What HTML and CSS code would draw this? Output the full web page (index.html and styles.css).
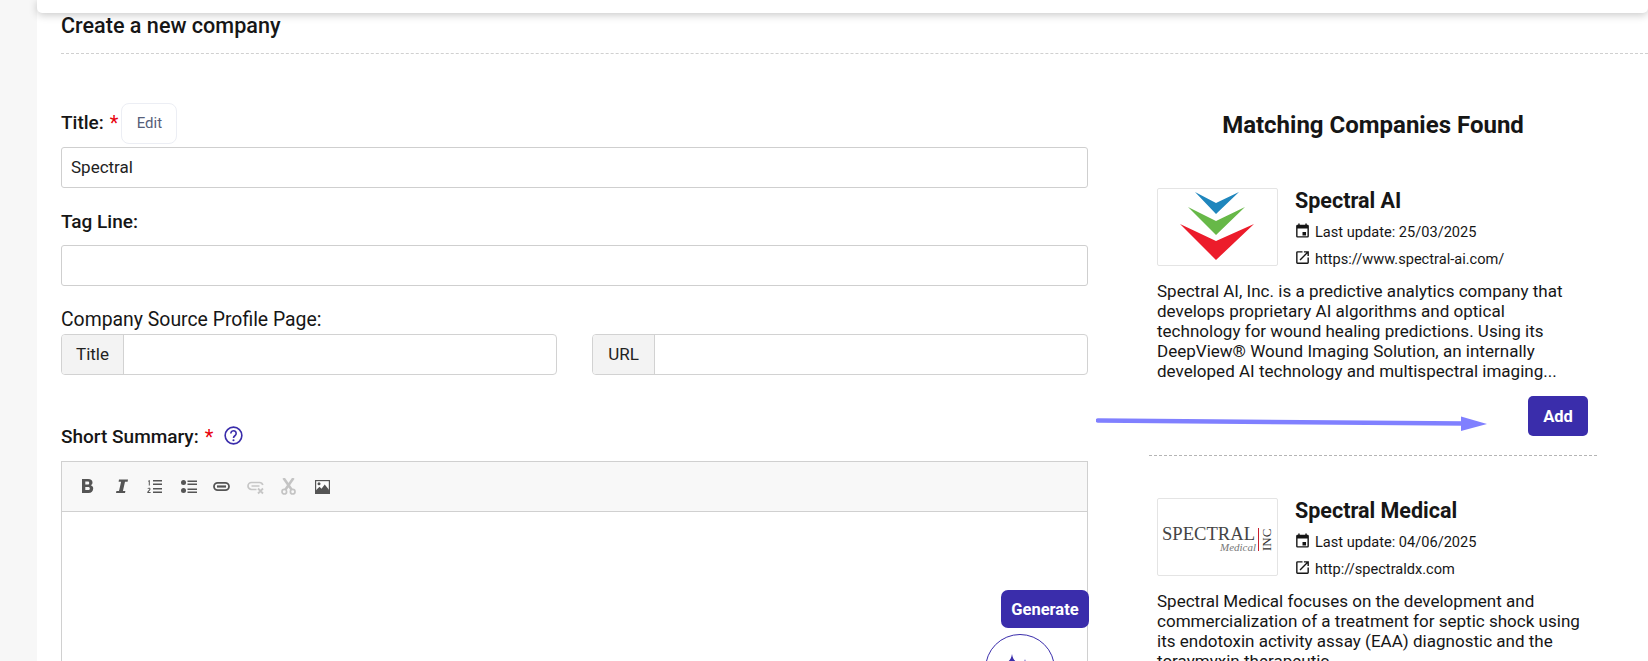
FILE: index.html
```html
<!DOCTYPE html>
<html lang="en">
<head>
<meta charset="utf-8">
<title>Create a new company</title>
<link rel="stylesheet" href="styles.css">
</head>
<body>
<div class="page">
  <aside class="rail"></aside>
  <div class="shell">
    <header class="topbar"></header>
    <main class="content">
      <h1 class="page-title">Create a new company</h1>
      <div class="columns">
        <form class="form">
          <div class="label-row title-row">
            <label class="label strong">Title:</label><span class="req">*</span>
            <button type="button" class="edit-btn">Edit</button>
          </div>
          <div class="input">Spectral</div>
          <label class="label strong tag-label">Tag Line:</label>
          <div class="input"></div>
          <label class="label source-label">Company Source Profile Page:</label>
          <div class="groups">
            <div class="group"><span class="addon">Title</span><span class="group-field"></span></div>
            <div class="group"><span class="addon">URL</span><span class="group-field"></span></div>
          </div>
          <div class="label-row summary-row">
            <label class="label strong">Short Summary:</label><span class="req">*</span>
            <svg class="help" viewBox="0 0 20 20" width="19" height="19"><circle cx="10" cy="10" r="8.800" fill="none" stroke="#3a2dab" stroke-width="1.700"/><path d="M7.200 7.800a2.800 2.800 0 1 1 4.500 2.200c-1.100.8-1.700 1.300-1.700 2.600" fill="none" stroke="#3a2dab" stroke-width="1.700"/><circle cx="10" cy="15" r="1.100" fill="#3a2dab"/></svg>
          </div>
          <div class="editor">
            <div class="toolbar">
              <svg class="tool" viewBox="0 0 17 17"><path d="M3 1h6.200c2.800 0 4.300 1.300 4.300 3.500 0 1.300-.6 2.300-1.800 2.800 1.600.5 2.500 1.600 2.500 3.200 0 2.700-1.800 4.500-4.700 4.500H3zm3.300 2.600v2.900h2.400c1 0 1.500-.5 1.500-1.500s-.6-1.400-1.500-1.400zm0 5.300v3.100h2.700c1.200 0 1.800-.6 1.800-1.600s-.6-1.500-1.800-1.500z" fill="#555"/></svg>
              <svg class="tool" viewBox="0 0 17 17"><path d="M6 1.500h9l-.4 2.200H12L9.900 13h2.500l-.4 2H3l.4-2H6l2.100-9.300H5.600z" fill="#555"/></svg>
              <svg class="tool" viewBox="0 0 17 17"><path d="M7 2h9v1.500H7zM7 5.500h9V7H7zM7 10h9v1.500H7zM7 13.500h9V15H7z" fill="#555"/><path d="M2.200 2.700 3.800 2v5.500H2.800V3.500l-.6.200zM1.500 10.400c.4-.8 3-1.100 3 .7 0 1.200-1.100 1.700-1.800 2.900h1.900v1H1.300v-.9c.8-1.300 2.100-2.100 2.100-3 0-.7-.9-.6-1.400 0z" fill="#555"/></svg>
              <svg class="tool" viewBox="0 0 17 17"><circle cx="3.500" cy="4.500" r="2.500" fill="#555"/><circle cx="3.500" cy="12.500" r="2.500" fill="#555"/><path d="M7.500 2.500H17V4H7.500zM7.500 5.500H17V7H7.500zM7.500 10.500H17V12H7.500zM7.500 13.500H17V15H7.500z" fill="#555"/></svg>
              <svg class="tool" viewBox="0 0 17 17"><rect x="1" y="4.800" width="15" height="7.400" rx="3.700" fill="none" stroke="#555" stroke-width="1.800"/><path d="M4 8.500h9" stroke="#555" stroke-width="2.200"/></svg>
              <svg class="tool" viewBox="0 0 17 17"><path d="M9.500 11.500H4.500a3.500 3.500 0 0 1 0-7h8a3.500 3.500 0 0 1 3.300 2.500M4.500 8h8" fill="none" stroke="#c6c6c6" stroke-width="1.700"/><path d="m11 10.500 5 5M16 10.500l-5 5" stroke="#c6c6c6" stroke-width="1.800"/></svg>
              <svg class="tool" viewBox="0 0 17 17"><path d="M3.500 0 11.500 11.500M13.500 0 5.500 11.500" stroke="#c4c4c4" stroke-width="2.600"/><circle cx="4.300" cy="13.700" r="2.300" fill="none" stroke="#c4c4c4" stroke-width="1.700"/><circle cx="12.700" cy="13.700" r="2.300" fill="none" stroke="#c4c4c4" stroke-width="1.700"/></svg>
              <svg class="tool" viewBox="0 0 17 17"><rect x="1" y="2" width="15" height="14" fill="#555"/><rect x="2.200" y="3.200" width="12.600" height="9" fill="#fff"/><circle cx="5" cy="5.800" r="1.500" fill="#555"/><path d="m2.200 12 3.300-3.200 2 2 3.200-4.300 4.100 5v2H2.200z" fill="#555"/></svg>
            </div>
            <div class="editor-body"></div>
            <button type="button" class="generate">Generate</button>
            <div class="ai-circle">
              <svg viewBox="0 0 68 40" width="68" height="40"><path d="M26 0c1 6 3.500 8.500 9.500 9.500-6 1-8.500 3.500-9.500 9.500-1-6-3.500-8.500-9.500-9.500 6-1 8.500-3.500 9.500-9.500z" fill="#3a2dab"/><path d="M39 5c.5 3 1.700 4.500 5 5-3.300.5-4.500 2-5 5-.5-3-1.700-4.500-5-5 3.300-.5 4.500-2 5-5z" fill="#3a2dab"/></svg>
            </div>
          </div>
        </form>

        <section class="matches">
          <h2 class="matches-title">Matching Companies Found</h2>
          <article class="company first">
            <div class="company-head">
              <div class="logo">
                <svg viewBox="0 0 119 76" width="119" height="76"><polygon points="37,3 58,14 81,3 58,25" fill="#1f86bd"/><polygon points="30,18 58,32 87,18 58,46" fill="#67b848"/><polygon points="22,35 58,52 96,35 58,71" fill="#ec1c2b"/></svg>
              </div>
              <div class="company-meta">
                <h3 class="company-name">Spectral AI</h3>
                <div class="meta-line"><svg class="meta-icon" viewBox="0 0 24 24"><path d="M19 4h-1V2h-2v2H8V2H6v2H5a2 2 0 0 0-2 2v14a2 2 0 0 0 2 2h14a2 2 0 0 0 2-2V6a2 2 0 0 0-2-2zm0 16H5V9h14zm-2-6h-5v5h5z" fill="#161616"/></svg>Last update: 25/03/2025</div>
                <div class="meta-line"><svg class="meta-icon" viewBox="0 0 24 24"><path d="M19 19H5V5h7V3H5a2 2 0 0 0-2 2v14a2 2 0 0 0 2 2h14a2 2 0 0 0 2-2v-7h-2zM14 3v2h3.600l-9.800 9.800 1.400 1.400L19 6.400V10h2V3z" fill="#161616"/></svg>https://www.spectral-ai.com/</div>
              </div>
            </div>
            <p class="company-desc">Spectral AI, Inc. is a predictive analytics company that develops proprietary AI algorithms and optical technology for wound healing predictions. Using its DeepView® Wound Imaging Solution, an internally developed AI technology and multispectral imaging...</p>
            <div class="add-row"><button type="button" class="add">Add</button></div>
          </article>
          <article class="company">
            <div class="company-head">
              <div class="logo">
                <svg viewBox="0 0 119 76" width="119" height="76"><text x="4" y="41" class="lg-main">SPECTRAL</text><text x="62" y="52" class="lg-sub">Medical</text><rect x="100" y="29" width="1" height="23" fill="#c8202f"/><text transform="translate(112.500 52) rotate(-90)" class="lg-inc">INC</text></svg>
              </div>
              <div class="company-meta">
                <h3 class="company-name">Spectral Medical</h3>
                <div class="meta-line"><svg class="meta-icon" viewBox="0 0 24 24"><path d="M19 4h-1V2h-2v2H8V2H6v2H5a2 2 0 0 0-2 2v14a2 2 0 0 0 2 2h14a2 2 0 0 0 2-2V6a2 2 0 0 0-2-2zm0 16H5V9h14zm-2-6h-5v5h5z" fill="#161616"/></svg>Last update: 04/06/2025</div>
                <div class="meta-line"><svg class="meta-icon" viewBox="0 0 24 24"><path d="M19 19H5V5h7V3H5a2 2 0 0 0-2 2v14a2 2 0 0 0 2 2h14a2 2 0 0 0 2-2v-7h-2zM14 3v2h3.600l-9.800 9.800 1.400 1.400L19 6.400V10h2V3z" fill="#161616"/></svg>http://spectraldx.com</div>
              </div>
            </div>
            <p class="company-desc">Spectral Medical focuses on the development and commercialization of a treatment for septic shock using its endotoxin activity assay (EAA) diagnostic and the toraymyxin therapeutic...</p>
          </article>
        </section>
      </div>
    </main>
  </div>
  <svg class="arrow" viewBox="0 0 400 20" width="400" height="20"><path d="M2 6.500 368 9.500" stroke="#8080ff" stroke-width="4.500" stroke-linecap="round"/><polygon points="365,2.500 391,10 365,17" fill="#8080ff"/></svg>
</div>
</body>
</html>
```
FILE: styles.css
```css
* { box-sizing: border-box; }
html, body { margin: 0; height: 661px; overflow: hidden; }
body { font-family: Roboto, "Liberation Sans", sans-serif; color: #161616; background: #fff; }
.page { display: flex; height: 661px; width: 1648px; overflow: hidden; position: relative; }
.rail { width: 37px; flex: none; background: #f7f7f7; }
.shell { flex: 1; min-width: 0; display: flex; flex-direction: column; }
.topbar { height: 13px; flex: none; background: #fff; border-radius: 0 0 5px 5px; box-shadow: 0 2px 8px rgba(0,0,0,.22); }
.content { padding: 0 0 0 24px; }
.page-title { margin: 0; height: 41px; font-size: 21.600px; line-height: 26px; font-weight: 500; border-bottom: 1px dashed #d0d0d0; }
.columns { display: flex; }
.form { width: 1027px; flex: none; padding-top: 49px; }
.label-row { display: flex; align-items: center; }
.title-row { height: 40px; }
.label { font-size: 19px; line-height: 22px; font-weight: 400; display: block; }
.source-label { font-size: 19.400px; }
.strong { font-weight: 500; }
.req { color: #e8000d; font-size: 20px; margin-left: 6px; line-height: 18px; }
.edit-btn { margin-left: 3px; width: 56px; height: 41px; background: #fff; border: 1px solid #eceef4; border-radius: 8px; font: 400 15px Roboto, sans-serif; color: #56607a; padding: 0; }
.input { height: 41px; margin-top: 4px; border: 1px solid #cfcfcf; border-radius: 3px; padding: 0 9px; font-size: 17px; line-height: 39px; color: #222; }
.tag-label { margin-top: 23px; }
.tag-label + .input { margin-top: 12px; }
.source-label { margin-top: 23px; }
.groups { display: flex; gap: 35px; margin-top: 3px; }
.group { flex: 1; height: 41px; display: flex; border: 1px solid #d2d2d2; border-radius: 4px; overflow: hidden; }
.addon { width: 62px; flex: none; background: #f3f3f3; border-right: 1px solid #d2d2d2; text-align: center; font-size: 17px; line-height: 39px; color: #222; }
.group-field { flex: 1; }
.summary-row { margin-top: 50px; height: 24px; }
.help { margin-left: 11px; margin-top: -4px; }
.editor { position: relative; margin-top: 12px; border: 1px solid #d0d0d0; border-bottom: 0; height: 240px; }
.toolbar { height: 50px; background: #f8f8f8; border-bottom: 1px solid #d0d0d0; display: flex; align-items: center; padding-left: 17px; gap: 16.500px; }
.tool { width: 17px; height: 17px; flex: none; }
.editor-body { height: 150px; }
.generate { position: absolute; right: -2px; top: 128px; width: 88px; height: 38px; border: 0; border-radius: 7px; background: #3a2dab; color: #fff; font: 700 16.500px Roboto, sans-serif; padding: 0; }
.ai-circle { position: absolute; left: 923px; top: 172px; width: 70px; height: 70px; border-radius: 50%; border: 1px solid #3a2dab; background: #fff; display: flex; justify-content: center; padding-top: 19px; }
.matches { width: 448px; margin-left: 61px; padding-top: 54px; }
.matches-title { margin: 0; text-align: center; font-size: 24px; line-height: 34px; font-weight: 700; }
.company { padding: 0 8px; }
.company.first { padding-top: 46px; padding-bottom: 19px; border-bottom: 1px dashed #b5b5b5; }
.company + .company { padding-top: 42px; }
.company-head { display: flex; }
.logo { width: 121px; height: 78px; flex: none; border: 1px solid #e4e4e4; border-radius: 2px; display: flex; overflow: hidden; }
.lg-main { font: 400 18.600px "Liberation Serif", serif; fill: #444; }
.lg-sub { font: italic 400 11px "Liberation Serif", serif; fill: #777; }
.lg-inc { font: 400 13px "Liberation Serif", serif; fill: #333; }
.company-meta { margin-left: 17px; }
.company-name { margin: 0; font-size: 21.500px; line-height: 26px; font-weight: 700; }
.meta-line { display: flex; align-items: center; font-size: 14.600px; line-height: 20px; margin-top: 7px; }
.company-name + .meta-line { margin-top: 8px; }
.meta-icon { width: 17px; height: 17px; margin-left: -1px; margin-right: 4px; margin-top: -3px; flex: none; }
.company-desc { margin: 12px 0 0; font-size: 17.050px; line-height: 20px; width: 430px; }
.add-row { display: flex; justify-content: flex-end; margin-top: 15px; padding-right: 1px; }
.add { width: 60px; height: 40px; border: 0; border-radius: 5px; background: #3a2dab; color: #fff; font: 700 16.500px Roboto, sans-serif; padding: 0; }
.arrow { position: absolute; left: 1096px; top: 414px; }
```
